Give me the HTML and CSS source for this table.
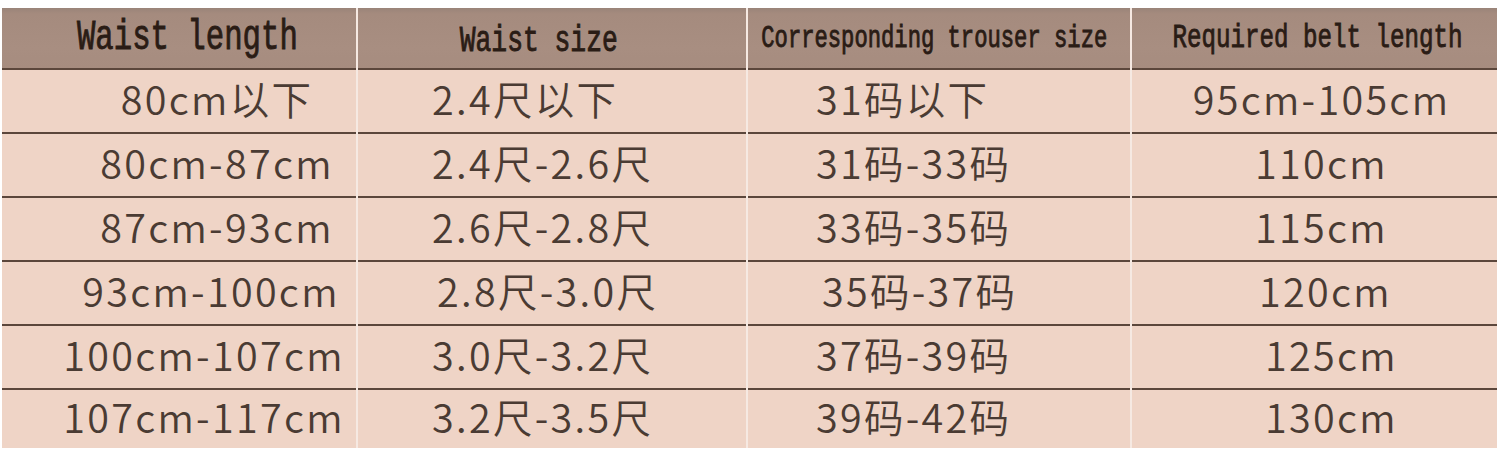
FILE: index.html
```html
<!DOCTYPE html>
<html lang="zh">
<head>
<meta charset="utf-8">
<title>Belt size chart</title>
<link rel="stylesheet" href="styles.css">
</head>
<body>
<div class="chart">
  <div class="cell head c1"><span class="ht">Waist length</span></div>
  <div class="cell head c2"><span class="ht">Waist size</span></div>
  <div class="cell head c3"><span class="ht">Corresponding trouser size</span></div>
  <div class="cell head c4"><span class="ht">Required belt length</span></div>

  <div class="cell c1 short">80cm以下</div>
  <div class="cell c2">2.4尺以下</div>
  <div class="cell c3">31码以下</div>
  <div class="cell c4">95cm-105cm</div>

  <div class="cell c1 short">80cm-87cm</div>
  <div class="cell c2">2.4尺-2.6尺</div>
  <div class="cell c3">31码-33码</div>
  <div class="cell c4">110cm</div>

  <div class="cell c1 short">87cm-93cm</div>
  <div class="cell c2">2.6尺-2.8尺</div>
  <div class="cell c3">33码-35码</div>
  <div class="cell c4">115cm</div>

  <div class="cell c1">93cm-100cm</div>
  <div class="cell c2 shift">2.8尺-3.0尺</div>
  <div class="cell c3 shift">35码-37码</div>
  <div class="cell c4 shift">120cm</div>

  <div class="cell c1 long">100cm-107cm</div>
  <div class="cell c2">3.0尺-3.2尺</div>
  <div class="cell c3">37码-39码</div>
  <div class="cell c4 shift2">125cm</div>

  <div class="cell c1 long last">107cm-117cm</div>
  <div class="cell c2 last">3.2尺-3.5尺</div>
  <div class="cell c3 last">39码-42码</div>
  <div class="cell c4 last shift2">130cm</div>
</div>
</body>
</html>
```

FILE: styles.css
```css
html, body {
  margin: 0;
  padding: 0;
  background: #ffffff;
}

.chart {
  margin: 8px 0 0 2px;
  width: 1495px;
  display: grid;
  grid-template-columns: 354px 388px 382px 365px;
  column-gap: 2px;
  background: #f6e9e2;
}

.cell {
  box-sizing: border-box;
  height: 64px;
  border-bottom: 2px solid #5b463b;
  background: #efd4c6;
  display: flex;
  align-items: center;
  font-family: "Noto Sans CJK SC", "Noto Sans", sans-serif;
  font-size: 39.5px;
  font-weight: 350;
  letter-spacing: 2.3px;
  line-height: 1;
  color: #4a3b33;
  white-space: nowrap;
  padding-bottom: 6px;
}

.cell.last {
  height: 58px;
  border-bottom: none;
}

.cell.c1 {
  justify-content: center;
  padding-left: 64px;
}

.cell.c1.short { padding-left: 76px; }
.cell.c1.long { padding-left: 50px; }

.cell.c2 {
  justify-content: flex-start;
  padding-left: 74px;
}

.cell.c3 {
  justify-content: flex-start;
  padding-left: 68px;
}

.cell.c4 {
  justify-content: center;
  padding-left: 14px;
}

.cell.c2.shift { padding-left: 79px; }
.cell.c3.shift { padding-left: 74px; }
.cell.c4.shift { padding-left: 22px; }
.cell.c4.shift2 { padding-left: 34px; }

.cell.head {
  height: 62px;
  padding: 0;
  justify-content: center;
  background: linear-gradient(to bottom, #9a8479 0px, #a58b7e 6px, #a88e81 40px, #a68c7f 100%);
  color: #2a1c15;
  font-family: "Liberation Mono", "Courier New", monospace;
  font-weight: normal;
  letter-spacing: 0;
  -webkit-text-stroke: 0.9px #2a1c15;
}

.ht {
  display: inline-block;
  transform: scaleX(0.72);
  line-height: normal;
}

.head.c1 { font-size: 42.6px; padding-left: 17px; }
.head.c2 { font-size: 36.6px; padding-right: 26px; padding-top: 6px; }
.head.c3 { font-size: 30.8px; padding-right: 9px; }
.head.c4 { font-size: 33.6px; padding-left: 6px; }
```
